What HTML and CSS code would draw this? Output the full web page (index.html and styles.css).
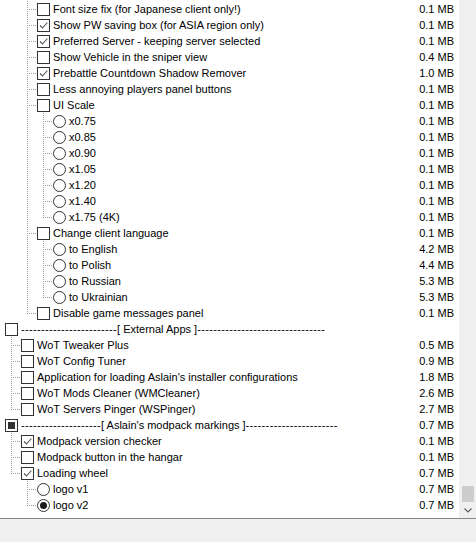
FILE: index.html
```html
<!DOCTYPE html>
<html>
<head>
<meta charset="utf-8">
<link rel="stylesheet" href="styles.css">
</head>
<body>
<div class="frame">
  <div class="list">
    <div class="row"><span class="g"></span><span class="g tee"></span><span class="cell"><span class="cb"></span></span><span class="lbl">Font size fix (for Japanese client only!)</span><span class="sz">0.1 MB</span></div>
    <div class="row"><span class="g"></span><span class="g tee"></span><span class="cell"><span class="cb on"><svg viewBox="0 0 11 11" width="11" height="11"><path d="M2 5.5 L4.5 8 L9.5 2.5" fill="none" stroke="#555" stroke-width="1.1"/></svg></span></span><span class="lbl">Show PW saving box (for ASIA region only)</span><span class="sz">0.1 MB</span></div>
    <div class="row"><span class="g"></span><span class="g tee"></span><span class="cell"><span class="cb on"><svg viewBox="0 0 11 11" width="11" height="11"><path d="M2 5.5 L4.5 8 L9.5 2.5" fill="none" stroke="#555" stroke-width="1.1"/></svg></span></span><span class="lbl">Preferred Server - keeping server selected</span><span class="sz">0.1 MB</span></div>
    <div class="row"><span class="g"></span><span class="g tee"></span><span class="cell"><span class="cb"></span></span><span class="lbl">Show Vehicle in the sniper view</span><span class="sz">0.4 MB</span></div>
    <div class="row"><span class="g"></span><span class="g tee"></span><span class="cell"><span class="cb on"><svg viewBox="0 0 11 11" width="11" height="11"><path d="M2 5.5 L4.5 8 L9.5 2.5" fill="none" stroke="#555" stroke-width="1.1"/></svg></span></span><span class="lbl">Prebattle Countdown Shadow Remover</span><span class="sz">1.0 MB</span></div>
    <div class="row"><span class="g"></span><span class="g tee"></span><span class="cell"><span class="cb"></span></span><span class="lbl">Less annoying players panel buttons</span><span class="sz">0.1 MB</span></div>
    <div class="row"><span class="g"></span><span class="g tee"></span><span class="cell"><span class="cb"></span></span><span class="lbl">UI Scale</span><span class="sz">0.1 MB</span></div>
    <div class="row"><span class="g"></span><span class="g pipe"></span><span class="g tee"></span><span class="cell"><span class="rb"></span></span><span class="lbl">x0.75</span><span class="sz">0.1 MB</span></div>
    <div class="row"><span class="g"></span><span class="g pipe"></span><span class="g tee"></span><span class="cell"><span class="rb"></span></span><span class="lbl">x0.85</span><span class="sz">0.1 MB</span></div>
    <div class="row"><span class="g"></span><span class="g pipe"></span><span class="g tee"></span><span class="cell"><span class="rb"></span></span><span class="lbl">x0.90</span><span class="sz">0.1 MB</span></div>
    <div class="row"><span class="g"></span><span class="g pipe"></span><span class="g tee"></span><span class="cell"><span class="rb"></span></span><span class="lbl">x1.05</span><span class="sz">0.1 MB</span></div>
    <div class="row"><span class="g"></span><span class="g pipe"></span><span class="g tee"></span><span class="cell"><span class="rb"></span></span><span class="lbl">x1.20</span><span class="sz">0.1 MB</span></div>
    <div class="row"><span class="g"></span><span class="g pipe"></span><span class="g tee"></span><span class="cell"><span class="rb"></span></span><span class="lbl">x1.40</span><span class="sz">0.1 MB</span></div>
    <div class="row"><span class="g"></span><span class="g pipe"></span><span class="g elbow"></span><span class="cell"><span class="rb"></span></span><span class="lbl">x1.75 (4K)</span><span class="sz">0.1 MB</span></div>
    <div class="row"><span class="g"></span><span class="g tee"></span><span class="cell"><span class="cb"></span></span><span class="lbl">Change client language</span><span class="sz">0.1 MB</span></div>
    <div class="row"><span class="g"></span><span class="g pipe"></span><span class="g tee"></span><span class="cell"><span class="rb"></span></span><span class="lbl">to English</span><span class="sz">4.2 MB</span></div>
    <div class="row"><span class="g"></span><span class="g pipe"></span><span class="g tee"></span><span class="cell"><span class="rb"></span></span><span class="lbl">to Polish</span><span class="sz">4.4 MB</span></div>
    <div class="row"><span class="g"></span><span class="g pipe"></span><span class="g tee"></span><span class="cell"><span class="rb"></span></span><span class="lbl">to Russian</span><span class="sz">5.3 MB</span></div>
    <div class="row"><span class="g"></span><span class="g pipe"></span><span class="g elbow"></span><span class="cell"><span class="rb"></span></span><span class="lbl">to Ukrainian</span><span class="sz">5.3 MB</span></div>
    <div class="row"><span class="g"></span><span class="g elbow"></span><span class="cell"><span class="cb"></span></span><span class="lbl">Disable game messages panel</span><span class="sz">0.1 MB</span></div>
    <div class="row"><span class="cell"><span class="cb"></span></span><span class="lbl"><span class="dash">------------------------</span>[ External Apps ]<span class="dash">--------------------------------</span></span><span class="sz"></span></div>
    <div class="row"><span class="g tee"></span><span class="cell"><span class="cb"></span></span><span class="lbl">WoT Tweaker Plus</span><span class="sz">0.5 MB</span></div>
    <div class="row"><span class="g tee"></span><span class="cell"><span class="cb"></span></span><span class="lbl">WoT Config Tuner</span><span class="sz">0.9 MB</span></div>
    <div class="row"><span class="g tee"></span><span class="cell"><span class="cb"></span></span><span class="lbl">Application for loading Aslain's installer configurations</span><span class="sz">1.8 MB</span></div>
    <div class="row"><span class="g tee"></span><span class="cell"><span class="cb"></span></span><span class="lbl">WoT Mods Cleaner (WMCleaner)</span><span class="sz">2.6 MB</span></div>
    <div class="row"><span class="g elbow"></span><span class="cell"><span class="cb"></span></span><span class="lbl">WoT Servers Pinger (WSPinger)</span><span class="sz">2.7 MB</span></div>
    <div class="row"><span class="cell"><span class="cb mixed"><span class="fill"></span></span></span><span class="lbl"><span class="dash">--------------------</span>[ Aslain's modpack markings ]<span class="dash">-----------------------</span></span><span class="sz">0.7 MB</span></div>
    <div class="row"><span class="g tee"></span><span class="cell"><span class="cb on"><svg viewBox="0 0 11 11" width="11" height="11"><path d="M2 5.5 L4.5 8 L9.5 2.5" fill="none" stroke="#555" stroke-width="1.1"/></svg></span></span><span class="lbl">Modpack version checker</span><span class="sz">0.1 MB</span></div>
    <div class="row"><span class="g tee"></span><span class="cell"><span class="cb"></span></span><span class="lbl">Modpack button in the hangar</span><span class="sz">0.1 MB</span></div>
    <div class="row"><span class="g elbow"></span><span class="cell"><span class="cb on"><svg viewBox="0 0 11 11" width="11" height="11"><path d="M2 5.5 L4.5 8 L9.5 2.5" fill="none" stroke="#555" stroke-width="1.1"/></svg></span></span><span class="lbl">Loading wheel</span><span class="sz">0.7 MB</span></div>
    <div class="row"><span class="g"></span><span class="g tee"></span><span class="cell"><span class="rb"></span></span><span class="lbl">logo v1</span><span class="sz">0.7 MB</span></div>
    <div class="row"><span class="g"></span><span class="g elbow"></span><span class="cell"><span class="rb sel"><span class="dot"></span></span></span><span class="lbl">logo v2</span><span class="sz">0.7 MB</span></div>
  </div>
  <div class="sb">
    <div class="thumb"></div>
    <div class="arrow"><svg viewBox="0 0 8 5" width="8" height="5"><path d="M0.5 0.5 L4 4 L7.5 0.5" fill="none" stroke="#606060" stroke-width="1.2"/></svg></div>
  </div>
</div>
</body>
</html>
```

FILE: styles.css
```css
html, body {
  margin: 0;
  padding: 0;
}
body {
  background: #f0f0f0;
  font-family: "Liberation Sans", Arial, sans-serif;
  font-size: 11px;
  color: #000;
}
.frame {
  display: flex;
  height: 518px;
  background: #fff;
  border-bottom: 1px solid #828790;
}
.list {
  flex: 1;
  padding-top: 1px;
  min-width: 0;
}
.row {
  display: flex;
  align-items: center;
  height: 16px;
  line-height: 16px;
  padding: 0 4px 0 5px;
  white-space: nowrap;
}
.g {
  flex: none;
  width: 16px;
  height: 16px;
}
.pipe {
  background: repeating-linear-gradient(to bottom, #a0a0a0 0 1px, transparent 1px 2px) 6px 0 / 1px 16px no-repeat;
}
.tee {
  background:
    repeating-linear-gradient(to right, #a0a0a0 0 1px, transparent 1px 2px) 8px 8px / 7px 1px no-repeat,
    repeating-linear-gradient(to bottom, #a0a0a0 0 1px, transparent 1px 2px) 6px 0 / 1px 16px no-repeat;
}
.elbow {
  background:
    repeating-linear-gradient(to right, #a0a0a0 0 1px, transparent 1px 2px) 8px 8px / 7px 1px no-repeat,
    repeating-linear-gradient(to bottom, #a0a0a0 0 1px, transparent 1px 2px) 6px 0 / 1px 9px no-repeat;
}
.cell {
  flex: none;
  width: 16px;
  height: 16px;
  display: flex;
  align-items: center;
}
.cb {
  box-sizing: border-box;
  width: 13px;
  height: 13px;
  border: 1px solid #333;
  background: #fff;
  display: flex;
  align-items: center;
  justify-content: center;
}
.cb svg {
  display: block;
}
.cb.mixed .fill {
  width: 7px;
  height: 7px;
  background: #333;
}
.rb {
  box-sizing: border-box;
  width: 13px;
  height: 13px;
  border: 1px solid #333;
  border-radius: 50%;
  background: #fff;
  display: flex;
  align-items: center;
  justify-content: center;
}
.rb .dot {
  width: 7px;
  height: 7px;
  border-radius: 50%;
  background: #1a1a1a;
}
.lbl {
  flex: 1;
  padding-left: 0;
}
.dash {
  letter-spacing: 0.34px;
}
.sz {
  flex: none;
  text-align: right;
  padding-right: 1px;
}
.sb {
  flex: none;
  width: 17px;
  background: #f0f0f0;
  display: flex;
  flex-direction: column;
  justify-content: flex-end;
}
.thumb {
  height: 16px;
  margin: 0 2px 0 3px;
  background: #cdcdcd;
}
.arrow {
  height: 16px;
  display: flex;
  align-items: center;
  justify-content: center;
}
.arrow svg {
  display: block;
}
```
